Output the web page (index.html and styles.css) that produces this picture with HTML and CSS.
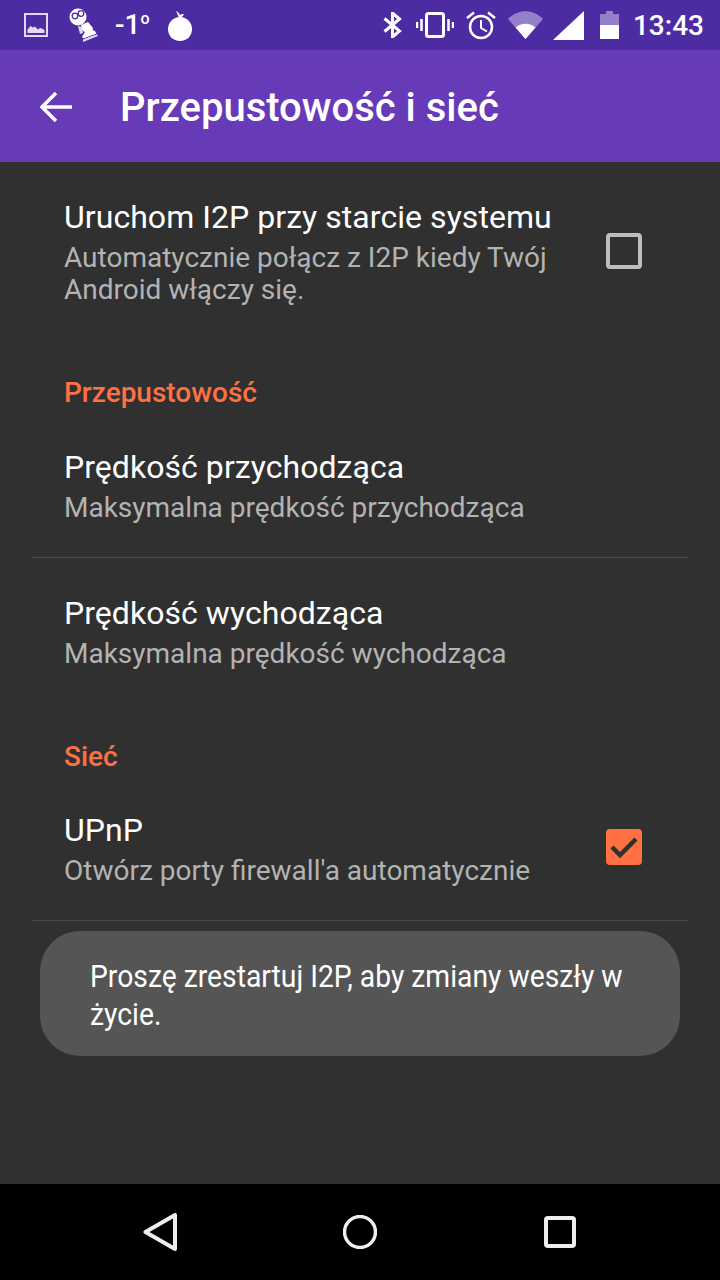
FILE: index.html
```html
<!DOCTYPE html>
<html lang="pl">
<head>
  <meta charset="UTF-8" />
  <meta name="viewport" content="width=device-width, initial-scale=1.0"/>
  <title>Przepustowość i sieć</title>
  <link rel="stylesheet" href="styles.css">
</head>
<body>
  <div class="screen">
    <div class="status-bar">
      <div class="status-left">
        <svg class="ic-picture" width="24" height="24" viewBox="0 0 24 24">
          <rect x="1" y="1" width="22" height="22" fill="none" stroke="#e3d9f2" stroke-width="2"/>
          <path d="M3.500 20v-3.500l3-3.500 2.500 1.500 2-1 3 3 2-1.500 2 .5 2.500 1.500V20z" fill="#e3d9f2"/>
        </svg>
        <svg class="ic-robot" width="30" height="34" viewBox="0 0 30 34">
          <circle cx="9" cy="9" r="8.500" fill="#fff"/>
          <circle cx="6" cy="8" r="2.800" fill="none" stroke="#4d2ca3" stroke-width="1.300"/>
          <circle cx="12" cy="5.500" r="2.800" fill="none" stroke="#4d2ca3" stroke-width="1.300"/>
          <path d="M12 17l7-3 5 6-1 4-5 2-5-4z" fill="#fff"/>
          <path d="M9 18l4 1 1 6-3 1z" fill="#e3d9f2"/>
          <path d="M16 24l5-3 5 2 2 4-12 5-3-3z" fill="#fff"/>
          <path d="M14 31l14-5" stroke="#4d2ca3" stroke-width="1"/>
          <path d="M14 34l15-6-1-1.500-14 5z" fill="#e3d9f2"/>
        </svg>
        <span class="temp">-1<sup>o</sup></span>
        <svg class="ic-pear" width="24" height="31" viewBox="0 0 24 31">
          <path d="M12 7C5 7 0 13 0 19c0 7 5 12 12 12s12-5 12-12c0-6-5-12-12-12z" fill="#fff"/>
          <path d="M11 8C10 5 9 3 8 1c2 1 3 2 4 4 1-1 2-1 4-1-1 2-2 3-4 4z" fill="#fff"/>
        </svg>
      </div>
      <div class="status-right">
        <svg class="ic-bt" width="19" height="26" viewBox="0 0 19 26">
          <path d="M1.500 6.500l15 12.500-7 6V1l7 6-15 12.500" fill="none" stroke="#fff" stroke-width="3"/>
        </svg>
        <svg class="ic-vibrate" width="38" height="26" viewBox="0 0 38 26">
          <rect x="10.500" y="1.500" width="17" height="23" rx="2" fill="none" stroke="#fff" stroke-width="3"/>
          <path d="M5.500 7v12M1 10v6M32.500 7v12M37 10v6" stroke="#fff" stroke-width="2.500" fill="none"/>
        </svg>
        <svg class="ic-alarm" width="30" height="29" viewBox="0 0 30 29">
          <circle cx="15" cy="16" r="11" fill="none" stroke="#fff" stroke-width="2.500"/>
          <path d="M15 9v8l6 3.500" fill="none" stroke="#fff" stroke-width="2"/>
          <path d="M1 7l7-5.500M29 7l-7-5.500" stroke="#fff" stroke-width="2.500" fill="none"/>
        </svg>
        <svg class="ic-wifi" width="35" height="28" viewBox="0 0 35 28">
          <path d="M17.500 28L0 8c10-10.500 25-10.500 35 0z" fill="#fff" fill-opacity=".4"/>
          <path d="M17.500 28L7.500 16.500c6-5 14-5 20 0z" fill="#fff"/>
        </svg>
        <svg class="ic-signal" width="31" height="29" viewBox="0 0 31 29">
          <path d="M0 29L31 0v29z" fill="#fff"/>
        </svg>
        <svg class="ic-battery" width="19" height="28" viewBox="0 0 19 28">
          <path d="M6 0h7v3h6v11H0V3h6z" fill="#fff" fill-opacity=".4"/>
          <path d="M0 14h19v14H0z" fill="#fff"/>
        </svg>
        <span class="clock">13:43</span>
      </div>
    </div>

    <div class="app-bar">
      <svg width="32" height="32" viewBox="0 0 32 32">
        <path d="M32 16H3M16 2L2 16l14 14" fill="none" stroke="#fff" stroke-width="3.500"/>
      </svg>
      <h1>Przepustowość i sieć</h1>
    </div>

    <div class="content">
      <div class="pref">
        <div class="pref-text">
          <div class="pref-title">Uruchom I2P przy starcie systemu</div>
          <div class="pref-summary">Automatycznie połącz z I2P kiedy Twój Android włączy się.</div>
        </div>
        <div class="checkbox"></div>
      </div>

      <div class="category">Przepustowość</div>
      <div class="pref divided">
        <div class="pref-text">
          <div class="pref-title">Prędkość przychodząca</div>
          <div class="pref-summary">Maksymalna prędkość przychodząca</div>
        </div>
      </div>
      <div class="pref">
        <div class="pref-text">
          <div class="pref-title">Prędkość wychodząca</div>
          <div class="pref-summary">Maksymalna prędkość wychodząca</div>
        </div>
      </div>

      <div class="category">Sieć</div>
      <div class="pref divided tight">
        <div class="pref-text">
          <div class="pref-title">UPnP</div>
          <div class="pref-summary">Otwórz porty firewall'a automatycznie</div>
        </div>
        <div class="checkbox checked">
          <svg width="36" height="36" viewBox="0 0 36 36">
            <path d="M6 18l8 8L30 10" fill="none" stroke="#303030" stroke-width="4.500"/>
          </svg>
        </div>
      </div>
    </div>

    <div class="nav-bar">
      <svg width="34" height="38" viewBox="0 0 34 38">
        <path d="M2.500 19L32 2v34z" fill="none" stroke="#eee" stroke-width="4" stroke-linejoin="round"/>
      </svg>
      <svg width="34" height="34" viewBox="0 0 34 34">
        <circle cx="17" cy="17" r="15.500" fill="none" stroke="#eee" stroke-width="3.500"/>
      </svg>
      <svg width="32" height="32" viewBox="0 0 32 32">
        <rect x="2" y="2" width="28" height="28" rx="2" fill="none" stroke="#eee" stroke-width="4"/>
      </svg>
    </div>

    <div class="toast"><div class="toast-text">Proszę zrestartuj I2P, aby zmiany weszły w życie.</div></div>
  </div>
</body>
</html>
```

FILE: styles.css
```css
* {
  box-sizing: border-box;
}

body {
  margin: 0;
  font-family: Roboto, sans-serif;
  background: #303030;
}

.screen {
  width: 720px;
  height: 1280px;
  position: relative;
  display: flex;
  flex-direction: column;
  overflow: hidden;
}

.status-bar {
  height: 50px;
  flex: none;
  background: #4d2ca3;
  display: flex;
  justify-content: space-between;
  align-items: center;
  padding: 0 16px 0 24px;
  color: #fff;
}

.status-left,
.status-right {
  display: flex;
  align-items: center;
}

.ic-robot { margin-left: 21px; }
.ic-pear { margin-left: 20px; margin-top: 1px; }
.ic-vibrate { margin-left: 14px; }
.ic-alarm { margin-left: 12px; }
.ic-wifi { margin-left: 12px; }
.ic-signal { margin-left: 10px; }
.ic-battery { margin-left: 16px; }

.temp {
  margin-left: 16px;
  font-size: 28px;
  font-weight: 500;
  line-height: 34px;
  width: 33px;
  white-space: nowrap;
}

.temp sup {
  font-size: 16px;
  line-height: 0;
}

.clock {
  margin-left: 14px;
  font-size: 28px;
  font-weight: 500;
}

.app-bar {
  height: 112px;
  flex: none;
  background: #673ab7;
  display: flex;
  align-items: center;
  padding: 2px 0 0 40px;
  gap: 48px;
  color: #fff;
}

.app-bar h1 {
  margin: 0;
  font-size: 40px;
  font-weight: 500;
}

.content {
  flex: 1;
  background: #303030;
}

.pref {
  margin: 0 32px;
  padding: 35px 46px 33px 32px;
  display: flex;
  align-items: center;
  gap: 40px;
}

.pref.divided {
  border-bottom: 1px solid #4a4a4a;
}

.pref.tight {
  padding-top: 34px;
}

.pref-text {
  flex: 1;
}

.pref-title {
  font-size: 32px;
  line-height: 40px;
  letter-spacing: .05px;
  color: #fff;
}

.pref-summary {
  margin-top: 5px;
  font-size: 28px;
  line-height: 32px;
  color: #b3b3b3;
}

.category {
  margin-top: 35px;
  padding-left: 64px;
  font-size: 28px;
  font-weight: 500;
  line-height: 38px;
  color: #ff7043;
}

.checkbox {
  width: 36px;
  height: 36px;
  flex: none;
  margin-bottom: 2px;
  border: 4px solid #bdbdbd;
  border-radius: 4px;
}

.checkbox.checked {
  margin-bottom: 4px;
  border: 0;
  background: #ff7043;
}

.checkbox svg {
  display: block;
}

.nav-bar {
  height: 96px;
  flex: none;
  background: #000;
  display: grid;
  grid-template-columns: 200px 200px 200px;
  justify-content: center;
  justify-items: center;
  align-items: center;
}

.toast {
  position: absolute;
  left: 40px;
  top: 931px;
  width: 640px;
  height: 125px;
  padding: 26px 0 0 50px;
  background: #555;
  border-radius: 40px;
}

.toast-text {
  width: 620px;
  font-size: 32px;
  line-height: 38px;
  color: #fff;
  transform: scaleX(.884);
  transform-origin: left top;
}
```
